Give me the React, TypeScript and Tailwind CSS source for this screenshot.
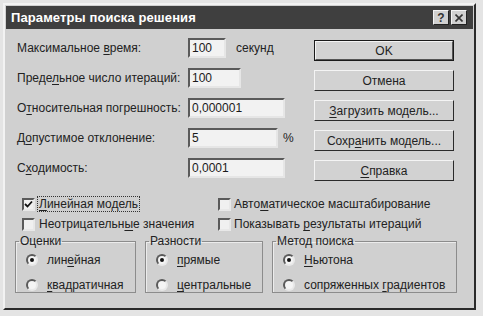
import React from "react";

const font = { fontFamily: '"Liberation Sans", Arial, sans-serif' };

function U({ children }: { children: React.ReactNode }) {
  return <span className="underline underline-offset-[2px]">{children}</span>;
}

function Input({ w, value }: { w: string; value: string }) {
  return (
    <div
      className={`${w} h-[20px] bg-[#f2f2f2] border-2 border-t-[#5a5a5a] border-l-[#5a5a5a] border-r-[#e6e6e6] border-b-[#e6e6e6] flex items-center pl-[2px] text-[12px] text-[#1a1a1a]`}
    >
      {value}
    </div>
  );
}

function Btn({ children, def }: { children: React.ReactNode; def?: boolean }) {
  return (
    <div
      className={`h-[21px] w-[140px] flex items-center justify-center text-[12px] text-[#222] bg-[#d2d2d2] ${
        def
          ? "border border-[#1a1a1a]"
          : "border border-t-[#f4f4f4] border-l-[#f4f4f4] border-r-[#2a2a2a] border-b-[#2a2a2a]"
      }`}
    >
      {def ? (
        <div className="w-full h-full flex items-center justify-center border border-t-[#f4f4f4] border-l-[#f4f4f4] border-r-[#555] border-b-[#555]">
          {children}
        </div>
      ) : (
        children
      )}
    </div>
  );
}

function Check({ checked }: { checked?: boolean }) {
  return (
    <div className="w-[13px] h-[13px] bg-[#f0f0f0] border-2 border-t-[#5a5a5a] border-l-[#5a5a5a] border-r-[#e8e8e8] border-b-[#e8e8e8] flex items-center justify-center shrink-0">
      {checked && (
        <svg width="9" height="9" viewBox="0 0 9 9">
          <path d="M1 4 L3.5 6.5 L8 1.5" stroke="#111" strokeWidth="1.8" fill="none" />
        </svg>
      )}
    </div>
  );
}

function Radio({ checked }: { checked?: boolean }) {
  return (
    <div className="w-[12px] h-[12px] rounded-full bg-[#f4f4f4] border-2 border-t-[#5a5a5a] border-l-[#5a5a5a] border-r-[#e8e8e8] border-b-[#e8e8e8] flex items-center justify-center shrink-0">
      {checked && <div className="w-[4px] h-[4px] rounded-full bg-[#111]" />}
    </div>
  );
}

function Group({
  title,
  w,
  items,
}: {
  title: string;
  w: string;
  items: [React.ReactNode, boolean][];
}) {
  return (
    <fieldset className={`${w} h-[58px] border border-[#8c8c8c] shadow-[inset_1px_1px_0_#ececec] pl-[10px] pt-[2px]`}>
      <legend className="text-[12px] text-[#222] ml-[-7px] px-[1px] leading-[12px]">{title}</legend>
      <div className="flex flex-col gap-[11px] mt-[4px]">
        {items.map(([label, c], i) => (
          <div key={i} className="flex items-center gap-[9px] h-[14px]">
            <Radio checked={c} />
            <span className="text-[12px] text-[#222]">{label}</span>
          </div>
        ))}
      </div>
    </fieldset>
  );
}

export default function App() {
  return (
    <div className="w-[483px] h-[316px] bg-[#e4e4e4] pt-[3px] pl-[3px]" style={font}>
      <div className="w-[473px] h-[307px] bg-[#d0d0d0] border-2 border-t-[#f2f2f2] border-l-[#f2f2f2] border-r-[#2a2a2a] border-b-[#2a2a2a] flex flex-col">
        {/* title bar */}
        <div className="h-[23px] mx-[1px] mt-[1px] bg-[#3f3f3f] flex items-center pl-[5px] pr-[6px]">
          <span className="text-white font-bold text-[13px] tracking-[0.1px]">Параметры поиска решения</span>
          <div className="ml-auto flex gap-[2px]">
            <div className="w-[16px] h-[15px] bg-[#d0d0d0] border border-t-[#f4f4f4] border-l-[#f4f4f4] border-r-[#222] border-b-[#222] flex items-center justify-center text-[12px] font-bold text-[#333] leading-none">
              ?
            </div>
            <div className="w-[16px] h-[15px] bg-[#d0d0d0] border border-t-[#f4f4f4] border-l-[#f4f4f4] border-r-[#222] border-b-[#222] flex items-center justify-center">
              <svg width="8" height="8" viewBox="0 0 8 8">
                <path d="M0.5 0.5 L7.5 7.5 M7.5 0.5 L0.5 7.5" stroke="#333" strokeWidth="1.6" />
              </svg>
            </div>
          </div>
        </div>

        {/* body */}
        <div className="flex flex-col pl-[10px]">
          <div className="flex">
            <div className="w-[296px] flex flex-col gap-[10px] pt-[9px] pl-[2px] text-[12px] text-[#222]">
              <div className="flex items-center h-[20px]">
                <span className="w-[171px]">
                  Максимальное <U>в</U>ремя:
                </span>
                <Input w="w-[38px]" value="100" />
                <span className="ml-[10px]">секунд</span>
              </div>
              <div className="flex items-center h-[20px]">
                <span className="w-[171px]">
                  Преде<U>л</U>ьное число итераций:
                </span>
                <Input w="w-[53px]" value="100" />
              </div>
              <div className="flex items-center h-[20px]">
                <span className="w-[171px]">
                  О<U>т</U>носительная погрешность:
                </span>
                <Input w="w-[97px]" value="0,000001" />
              </div>
              <div className="flex items-center h-[20px]">
                <span className="w-[171px]">
                  Д<U>о</U>пустимое отклонение:
                </span>
                <Input w="w-[90px]" value="5" />
                <span className="ml-[5px]">%</span>
              </div>
              <div className="flex items-center h-[20px]">
                <span className="w-[171px]">
                  С<U>х</U>одимость:
                </span>
                <Input w="w-[97px]" value="0,0001" />
              </div>
            </div>
            <div className="flex flex-col gap-[9px] pt-[11px] ml-[3px]">
              <Btn def>OK</Btn>
              <Btn>Отмена</Btn>
              <Btn>
                <span>
                  <U>З</U>агрузить модель...
                </span>
              </Btn>
              <Btn>
                <span>
                  Сохр<U>а</U>нить модель...
                </span>
              </Btn>
              <Btn>
                <span>
                  <U>С</U>правка
                </span>
              </Btn>
            </div>
          </div>

          {/* checkboxes */}
          <div className="flex mt-[16px] pl-[7px] text-[12px] text-[#222]">
            <div className="w-[196px] flex flex-col gap-[6px]">
              <div className="flex items-center h-[14px]">
                <Check checked />
                <span className="ml-[2px] px-[1px] border border-dotted border-[#333] leading-[14px]">
                  <U>Л</U>инейная модель
                </span>
              </div>
              <div className="flex items-center h-[14px]">
                <Check />
                <span className="ml-[4px]">
                  Неотрицательн<U>ы</U>е значения
                </span>
              </div>
            </div>
            <div className="flex flex-col gap-[6px]">
              <div className="flex items-center h-[14px]">
                <Check />
                <span className="ml-[3px]">
                  Авто<U>м</U>атическое масштабирование
                </span>
              </div>
              <div className="flex items-center h-[14px]">
                <Check />
                <span className="ml-[3px]">
                  Показывать <U>р</U>езультаты итераций
                </span>
              </div>
            </div>
          </div>

          {/* groups */}
          <div className="flex gap-[9px] mt-[4px]">
            <Group
              title="Оценки"
              w="w-[121px]"
              items={[
                [<span>лин<U>е</U>йная</span>, true],
                [<span><U>к</U>вадратичная</span>, false],
              ]}
            />
            <Group
              title="Разности"
              w="w-[118px]"
              items={[
                [<span><U>п</U>рямые</span>, true],
                [<span><U>ц</U>ентральные</span>, false],
              ]}
            />
            <Group
              title="Метод поиска"
              w="w-[185px]"
              items={[
                [<span><U>Н</U>ьютона</span>, true],
                [<span>сопряженных <U>г</U>радиентов</span>, false],
              ]}
            />
          </div>
        </div>
      </div>
    </div>
  );
}
